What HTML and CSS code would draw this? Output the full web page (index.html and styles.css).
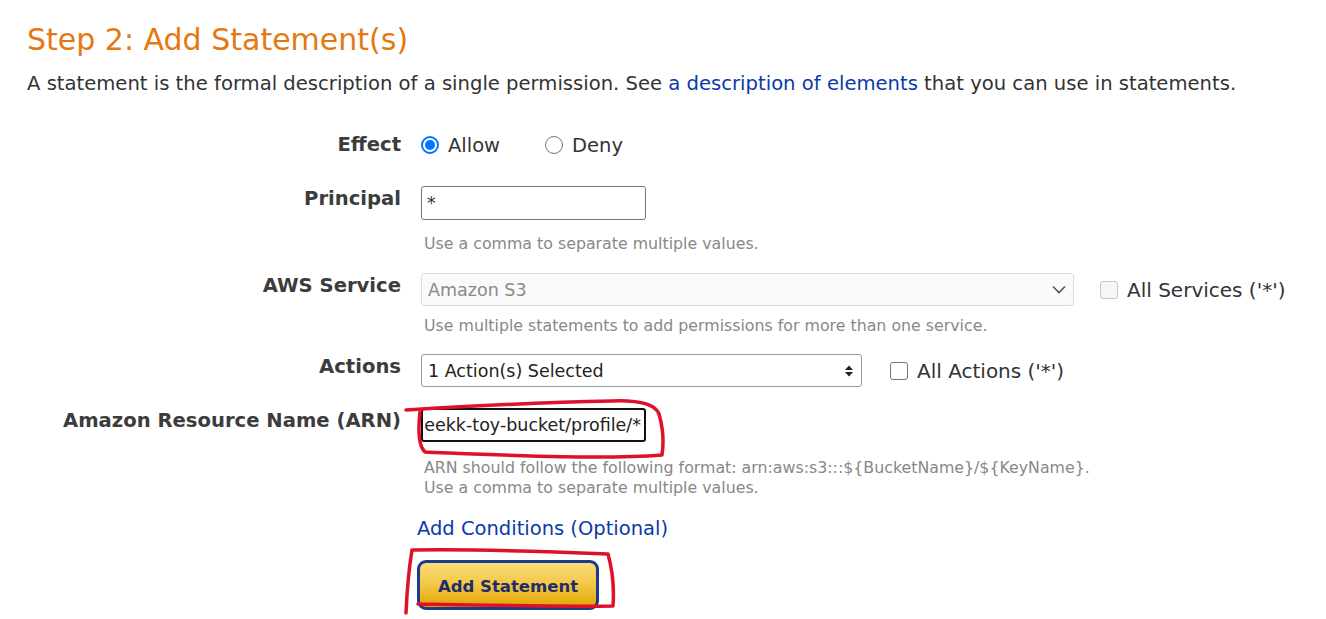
FILE: index.html
```html
<!DOCTYPE html>
<html>
<head>
<meta charset="utf-8">
<link rel="stylesheet" href="styles.css">
</head>
<body>
<div class="page">
  <h2 class="title">Step 2: Add Statement(s)</h2>
  <p class="intro">A statement is the formal description of a single permission. See <a class="link" href="#">a description of elements</a> that you can use in statements.</p>

  <div class="form">
    <div class="row row-effect">
      <div class="label">Effect</div>
      <div class="ctrl">
        <div class="radios">
          <label class="opt"><span class="radio on"></span>Allow</label>
          <label class="opt"><span class="radio"></span>Deny</label>
        </div>
      </div>
    </div>

    <div class="row row-principal">
      <div class="label">Principal</div>
      <div class="ctrl">
        <div class="input small">*</div>
        <div class="help">Use a comma to separate multiple values.</div>
      </div>
    </div>

    <div class="row row-service">
      <div class="label">AWS Service</div>
      <div class="ctrl">
        <div class="line">
          <div class="select disabled wide">
            <span>Amazon S3</span>
            <svg class="chev" width="14" height="9" viewBox="0 0 14 9"><path d="M1 1.5 L7 7.5 L13 1.5" fill="none" stroke="#555" stroke-width="1.6"/></svg>
          </div>
          <label class="check-opt"><span class="box dis"></span>All Services ('*')</label>
        </div>
        <div class="help">Use multiple statements to add permissions for more than one service.</div>
      </div>
    </div>

    <div class="row row-actions">
      <div class="label">Actions</div>
      <div class="ctrl">
        <div class="line">
          <div class="select mid">
            <span>1 Action(s) Selected</span>
            <svg class="updown" width="8" height="12" viewBox="0 0 8 12"><path d="M0 5 L4 0.5 L8 5 Z M0 7 L4 11.5 L8 7 Z" fill="#222"/></svg>
          </div>
          <label class="check-opt second"><span class="box"></span>All Actions ('*')</label>
        </div>
      </div>
    </div>

    <div class="row row-arn">
      <div class="label">Amazon Resource Name (ARN)</div>
      <div class="ctrl">
        <div class="input small focus"><span>eekk-toy-bucket/profile/*</span></div>
        <div class="help">ARN should follow the following format: arn:aws:s3:::${BucketName}/${KeyName}.<br>Use a comma to separate multiple values.</div>
      </div>
    </div>

    <div class="actions-area">
      <a class="link cond" href="#">Add Conditions (Optional)</a>
      <button class="btn">Add Statement</button>
    </div>
  </div>

  <svg class="marks" width="1326" height="619" viewBox="0 0 1326 619">
    <path d="M406 410 C470 406 560 402 612 401 C640 400 655 404 659 414 C663 428 664 442 662 455 C600 460 500 455 425 452 C418 446 418 430 420 412" fill="none" stroke="#e0102a" stroke-width="3.5" stroke-linecap="round" stroke-linejoin="round"/>
    <path d="M406 613 C407 590 409 568 412 550 C470 549 560 552 608 554 C613 572 614 592 613 606 C560 607 470 605 418 604" fill="none" stroke="#e0102a" stroke-width="3.5" stroke-linecap="round" stroke-linejoin="round"/>
  </svg>
</div>
</body>
</html>
```

FILE: styles.css
```css
html, body {
  margin: 0;
  padding: 0;
  background: #fff;
}
body {
  font-family: "DejaVu Sans", Verdana, sans-serif;
  color: #333;
}
.page {
  position: relative;
  width: 1326px;
  height: 619px;
  padding: 0 0 0 27px;
  box-sizing: border-box;
  overflow: hidden;
}
.title {
  margin: 0;
  padding-top: 22px;
  font-size: 30px;
  font-weight: normal;
  color: #e47911;
  line-height: 36px;
}
.intro {
  margin: 14px 0 0 0;
  font-size: 19.6px;
  line-height: 24px;
  color: #333;
  white-space: nowrap;
}
.link {
  color: #0a3aa8;
  text-decoration: none;
}
.form {
  margin-top: 36px;
}
.row {
  display: grid;
  grid-template-columns: 374px 1fr;
  column-gap: 20px;
}
.label {
  text-align: right;
  font-weight: bold;
  font-size: 19.6px;
  color: #3c3c3c;
  line-height: 26px;
  white-space: nowrap;
}
.ctrl {
  display: flex;
  flex-direction: column;
  align-items: flex-start;
}
.radios {
  display: flex;
  gap: 45px;
  height: 26px;
  align-items: center;
}
.opt {
  display: flex;
  align-items: center;
  gap: 9px;
  font-size: 19.5px;
  color: #333;
}
.radio {
  width: 18px;
  height: 18px;
  border-radius: 50%;
  border: 1.5px solid #767676;
  box-sizing: border-box;
  display: inline-block;
  position: relative;
}
.radio.on {
  border: 2px solid #0075ff;
}
.radio.on::after {
  content: "";
  position: absolute;
  left: 2px;
  top: 2px;
  width: 10px;
  height: 10px;
  border-radius: 50%;
  background: #0075ff;
}
.row-principal {
  margin-top: 28px;
}
.input {
  height: 34px;
  box-sizing: border-box;
  border: 1px solid #767676;
  border-radius: 3px;
  padding: 0 5px;
  display: flex;
  align-items: center;
  font-size: 17.5px;
  color: #333;
  background: #fff;
}
.input.small {
  width: 225px;
}
.input.focus {
  border: 2px solid #111;
  overflow: hidden;
  white-space: nowrap;
  justify-content: flex-end;
  padding: 0 3px;
  color: #222;
}
.input.focus span {
  flex: none;
}
.help {
  font-family: "DejaVu Sans", Verdana, sans-serif;
  font-size: 15.8px;
  color: #888;
  line-height: 20px;
  margin-top: 14px;
  padding-left: 3px;
  white-space: nowrap;
}
.row-service {
  margin-top: 19px;
}
.line {
  display: flex;
  align-items: center;
}
.select {
  height: 33px;
  box-sizing: border-box;
  border: 1px solid #999;
  border-radius: 3px;
  display: flex;
  align-items: center;
  justify-content: space-between;
  padding: 0 7px 0 6px;
  font-size: 17.5px;
  color: #222;
  background: #fff;
}
.select.disabled {
  border-color: #dcdcdc;
  color: #8a8a8a;
  background: #fafafa;
}
.select.wide {
  width: 653px;
}
.select.mid {
  width: 441px;
}
.updown {
  margin-right: 1px;
}
.check-opt {
  display: flex;
  align-items: center;
  gap: 9px;
  margin-left: 26px;
  font-size: 20px;
  color: #333;
}
.check-opt.second {
  margin-left: 28px;
}
.box {
  width: 18px;
  height: 18px;
  border: 1.5px solid #767676;
  border-radius: 3px;
  box-sizing: border-box;
  display: inline-block;
  background: #fff;
}
.box.dis {
  border-color: #c8c8c8;
  background: #f6f6f6;
}
.row-service .help {
  margin-top: 10px;
}
.row-actions {
  margin-top: 18px;
}
.row-arn {
  margin-top: 21px;
}
.row-arn .help {
  margin-top: 16px;
}
.actions-area {
  margin-left: 390px;
  margin-top: 18px;
  display: flex;
  flex-direction: column;
  align-items: flex-start;
}
.cond {
  font-size: 19.5px;
  line-height: 26px;
  color: #0a3aa8;
}
.btn {
  margin-top: 18px;
  width: 182px;
  height: 50px;
  border: 3px solid #1a3a8a;
  border-radius: 9px;
  background: linear-gradient(to bottom, #f9dc7a 0%, #f3c545 50%, #e2a700 100%);
  font-family: "DejaVu Sans", Verdana, sans-serif;
  font-weight: bold;
  font-size: 16.5px;
  color: #1f2d6b;
  padding: 2px 0 0 0;
  cursor: pointer;
}
.marks {
  position: absolute;
  left: 0;
  top: 0;
  pointer-events: none;
}
```
